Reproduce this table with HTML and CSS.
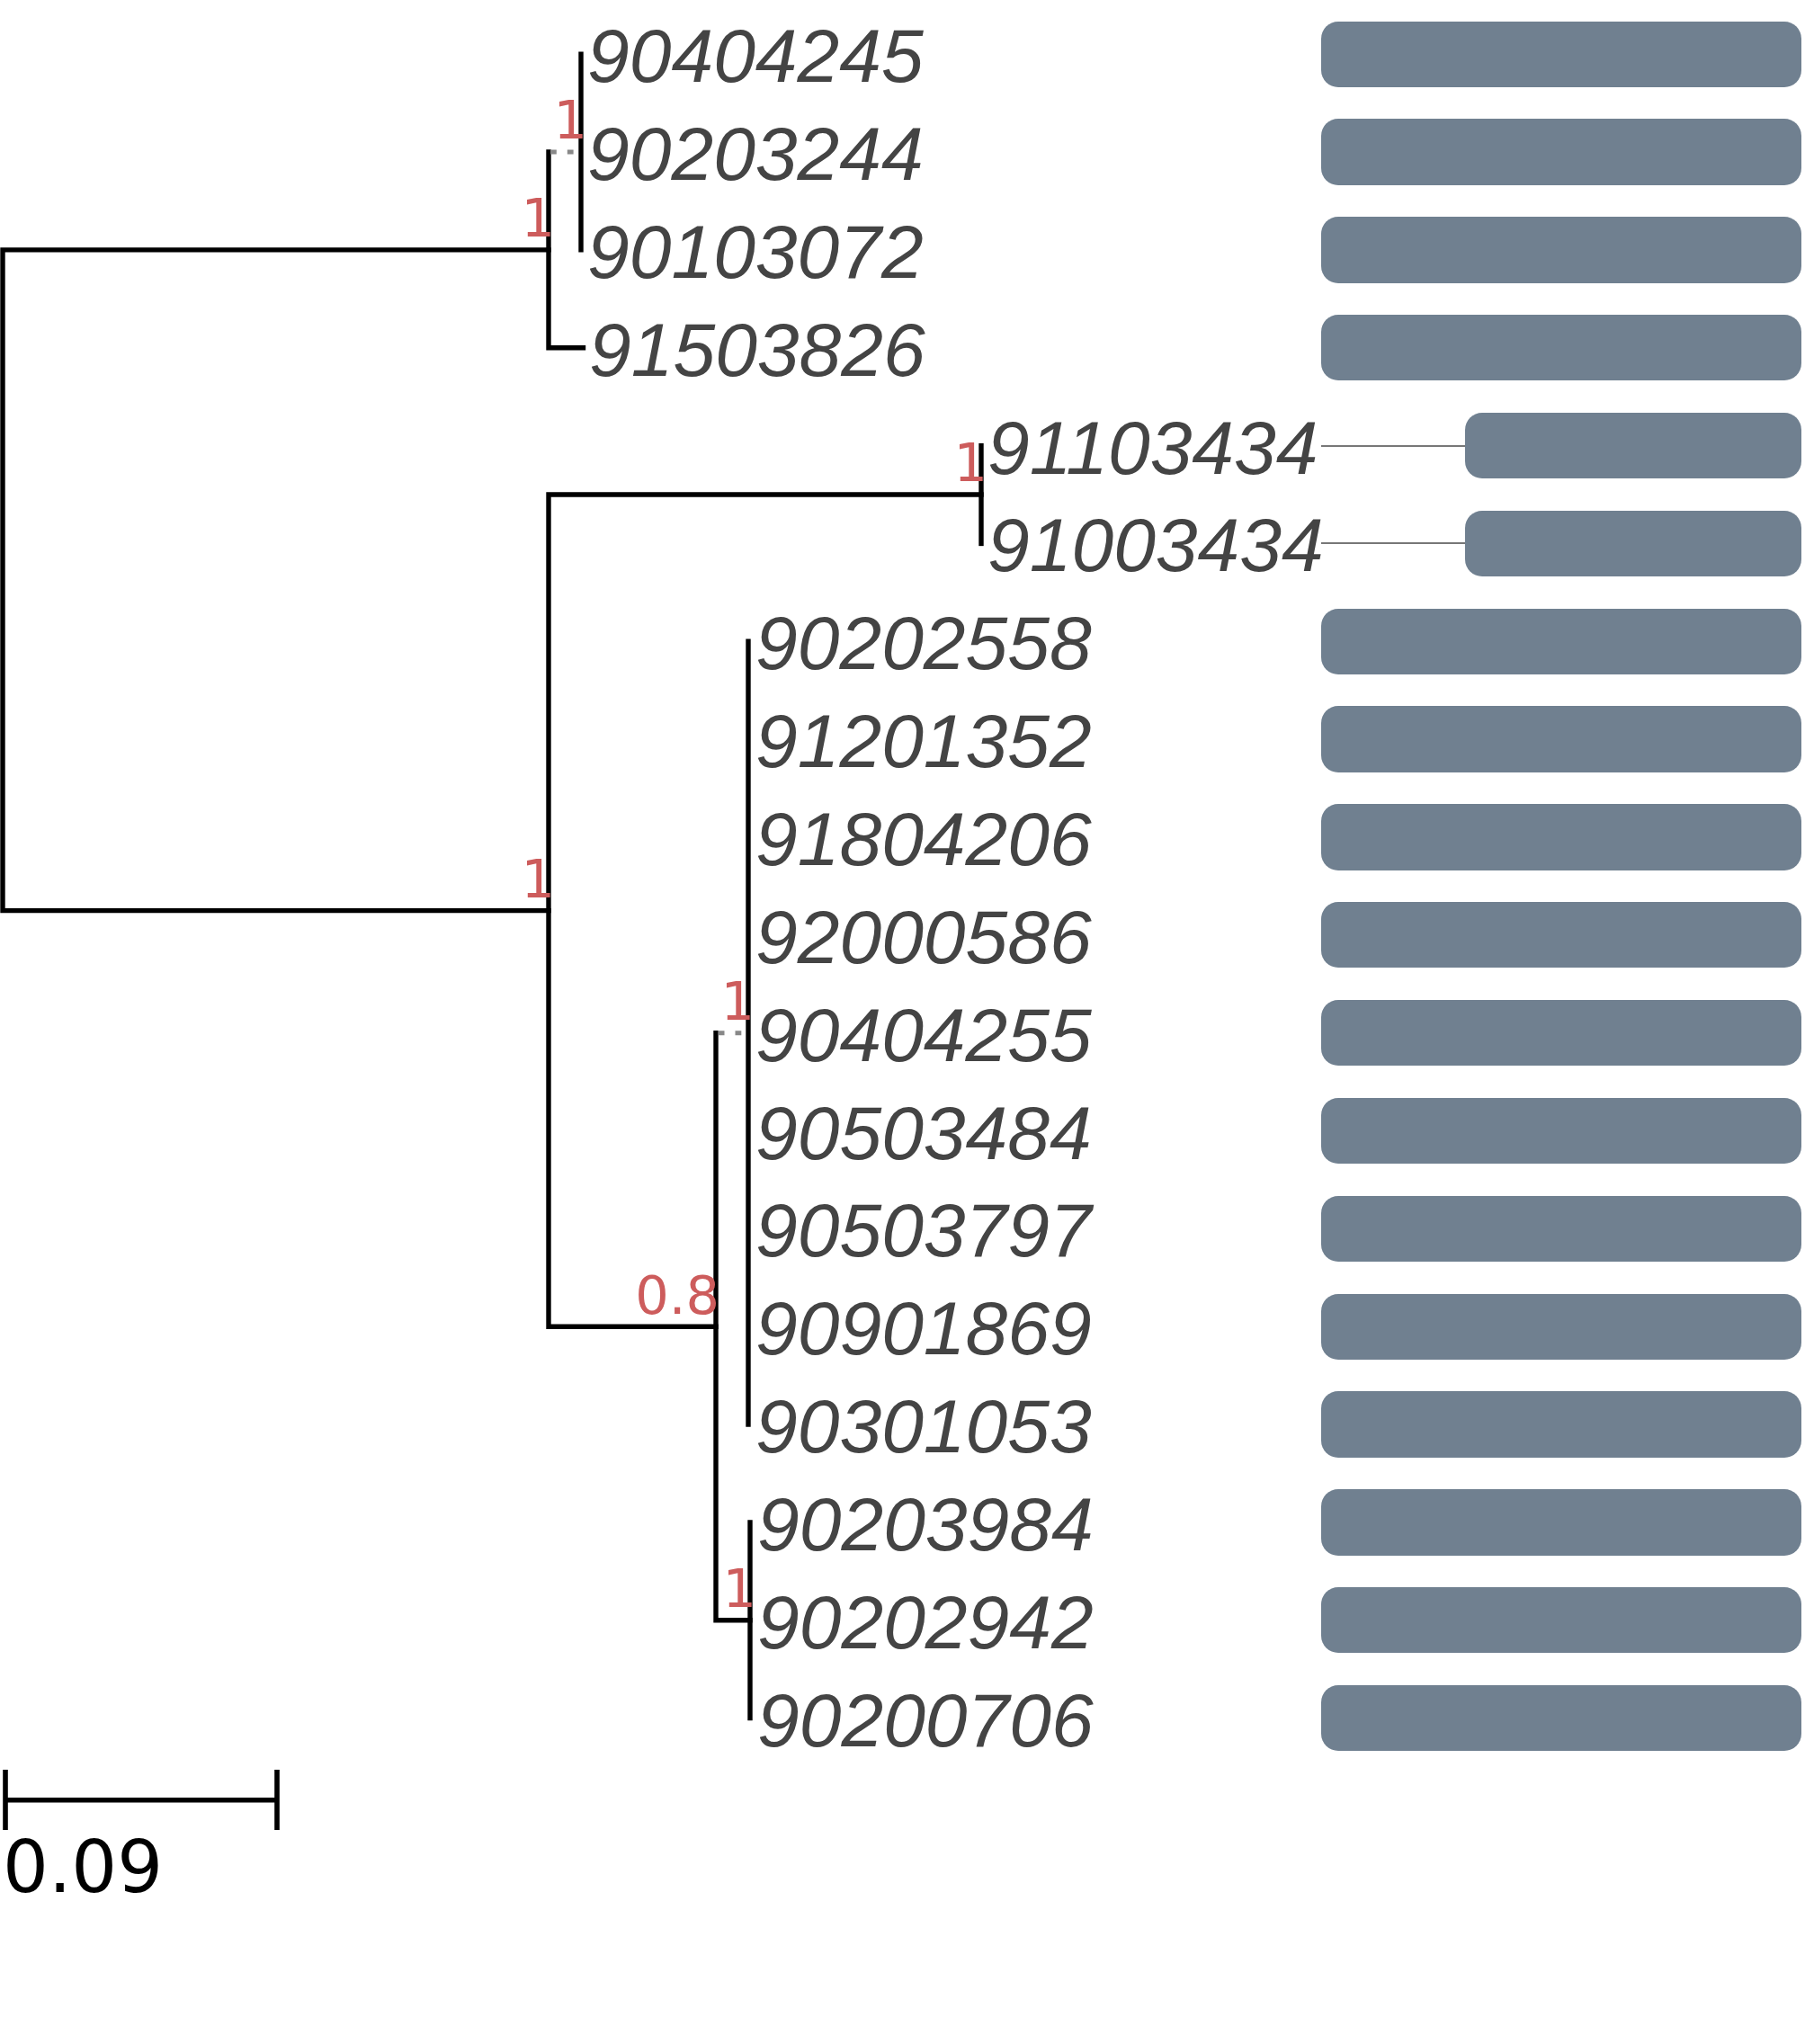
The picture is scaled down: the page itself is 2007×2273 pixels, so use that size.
FILE: index.html
```html
<!DOCTYPE html>
<html lang="en">
<head>
<meta charset="utf-8">
<title>Phylogenetic tree</title>
<link rel="stylesheet" href="styles.css">
</head>
<body>
<div class="plot">
  <svg class="tree" width="1110" height="1960" viewBox="0 0 1110 1960">
    <g class="branches">
      <path d="M610 277.9 H3 V1012.6 H610"/>
      <path d="M610 169.05 V386.75 H648.5"/>
      <path d="M646 60.2 V277.9"/>
      <path d="M1091 550 H610 V1475.25 H796"/>
      <path d="M1091 495.6 V604.45"/>
      <path d="M796 1148.7 V1801.8 H834"/>
      <path d="M832 713.3 V1584.1"/>
      <path d="M834 1692.95 V1910.65"/>
    </g>
    <g class="dashes">
      <path d="M612 169.05 H641"/>
      <path d="M798.7 1148.7 H827"/>
    </g>
    <g class="support">
      <text x="653" y="154">1</text>
      <text x="617" y="263">1</text>
      <text x="1098" y="535">1</text>
      <text x="617" y="997.6">1</text>
      <text x="800" y="1461">0.8</text>
      <text x="839" y="1134">1</text>
      <text x="841" y="1787">1</text>
    </g>
  </svg>
  <div class="rows">
    <div class="row"><div class="label-cell"><span class="leaf" style="padding-left:653px">90404245</span></div><div class="track"><span class="lead"></span><span class="bar" style="width:534px"></span></div></div>
    <div class="row"><div class="label-cell"><span class="leaf" style="padding-left:653px">90203244</span></div><div class="track"><span class="lead"></span><span class="bar" style="width:534px"></span></div></div>
    <div class="row"><div class="label-cell"><span class="leaf" style="padding-left:653px">90103072</span></div><div class="track"><span class="lead"></span><span class="bar" style="width:534px"></span></div></div>
    <div class="row"><div class="label-cell"><span class="leaf" style="padding-left:655px">91503826</span></div><div class="track"><span class="lead"></span><span class="bar" style="width:534px"></span></div></div>
    <div class="row"><div class="label-cell"><span class="leaf" style="padding-left:1098px">91103434</span></div><div class="track"><span class="lead"></span><span class="bar" style="width:374px"></span></div></div>
    <div class="row"><div class="label-cell"><span class="leaf" style="padding-left:1098px">91003434</span></div><div class="track"><span class="lead"></span><span class="bar" style="width:374px"></span></div></div>
    <div class="row"><div class="label-cell"><span class="leaf" style="padding-left:840px">90202558</span></div><div class="track"><span class="lead"></span><span class="bar" style="width:534px"></span></div></div>
    <div class="row"><div class="label-cell"><span class="leaf" style="padding-left:840px">91201352</span></div><div class="track"><span class="lead"></span><span class="bar" style="width:534px"></span></div></div>
    <div class="row"><div class="label-cell"><span class="leaf" style="padding-left:840px">91804206</span></div><div class="track"><span class="lead"></span><span class="bar" style="width:534px"></span></div></div>
    <div class="row"><div class="label-cell"><span class="leaf" style="padding-left:840px">92000586</span></div><div class="track"><span class="lead"></span><span class="bar" style="width:534px"></span></div></div>
    <div class="row"><div class="label-cell"><span class="leaf" style="padding-left:840px">90404255</span></div><div class="track"><span class="lead"></span><span class="bar" style="width:534px"></span></div></div>
    <div class="row"><div class="label-cell"><span class="leaf" style="padding-left:840px">90503484</span></div><div class="track"><span class="lead"></span><span class="bar" style="width:534px"></span></div></div>
    <div class="row"><div class="label-cell"><span class="leaf" style="padding-left:840px">90503797</span></div><div class="track"><span class="lead"></span><span class="bar" style="width:534px"></span></div></div>
    <div class="row"><div class="label-cell"><span class="leaf" style="padding-left:840px">90901869</span></div><div class="track"><span class="lead"></span><span class="bar" style="width:534px"></span></div></div>
    <div class="row"><div class="label-cell"><span class="leaf" style="padding-left:840px">90301053</span></div><div class="track"><span class="lead"></span><span class="bar" style="width:534px"></span></div></div>
    <div class="row"><div class="label-cell"><span class="leaf" style="padding-left:842px">90203984</span></div><div class="track"><span class="lead"></span><span class="bar" style="width:534px"></span></div></div>
    <div class="row"><div class="label-cell"><span class="leaf" style="padding-left:842px">90202942</span></div><div class="track"><span class="lead"></span><span class="bar" style="width:534px"></span></div></div>
    <div class="row"><div class="label-cell"><span class="leaf" style="padding-left:842px">90200706</span></div><div class="track"><span class="lead"></span><span class="bar" style="width:534px"></span></div></div>
  </div>
</div>
<div class="scale">
  <svg class="scale-bar" width="320" height="72" viewBox="0 0 320 72">
    <path d="M6 3 V70 M6 36.7 H308 M308 3 V70"/>
  </svg>
  <div class="scale-label">0.09</div>
</div>
</body>
</html>
```

FILE: styles.css
```css
html, body {
  margin: 0;
  padding: 0;
  background: #ffffff;
}

body {
  width: 2007px;
  min-height: 2273px;
  font-family: "Liberation Sans", Arial, sans-serif;
}

.plot {
  display: grid;
  grid-template-columns: 2007px;
}

.tree,
.rows {
  grid-area: 1 / 1;
}

.tree {
  display: block;
  overflow: visible;
}

.branches path {
  fill: none;
  stroke: #000000;
  stroke-width: 5.4;
  stroke-linecap: square;
  stroke-linejoin: miter;
}

.dashes path {
  fill: none;
  stroke: #888888;
  stroke-width: 5;
  stroke-linecap: butt;
  stroke-dasharray: 6.8 12;
}

.support text {
  font-family: "DejaVu Sans", sans-serif;
  font-size: 59px;
  fill: #cd5c5c;
  text-anchor: end;
}

.rows {
  display: flex;
  flex-direction: column;
  padding-top: 5.8px;
}

.row {
  height: 108.85px;
  display: grid;
  grid-template-columns: 1469px 534px;
  align-items: center;
}

.label-cell {
  display: flex;
  align-items: center;
  white-space: nowrap;
  overflow: visible;
}

.leaf {
  font-family: "Liberation Sans", Arial, sans-serif;
  font-style: italic;
  font-size: 84px;
  line-height: 84px;
  color: #444444;
  padding-top: 4px;
}

.track {
  display: flex;
  align-items: center;
  height: 100%;
}

.lead {
  flex: 1;
  height: 2px;
  background: #777777;
}

.bar {
  height: 73.3px;
  border-radius: 19px;
  background: #708090;
  flex: none;
}

.scale {
  display: flex;
  flex-direction: column;
}

.scale-bar {
  display: block;
}

.scale-bar path {
  fill: none;
  stroke: #000000;
  stroke-width: 5.6;
}

.scale-label {
  font-family: "DejaVu Sans", sans-serif;
  font-size: 80px;
  line-height: 80px;
  color: #000000;
  margin-left: 3px;
}
```
